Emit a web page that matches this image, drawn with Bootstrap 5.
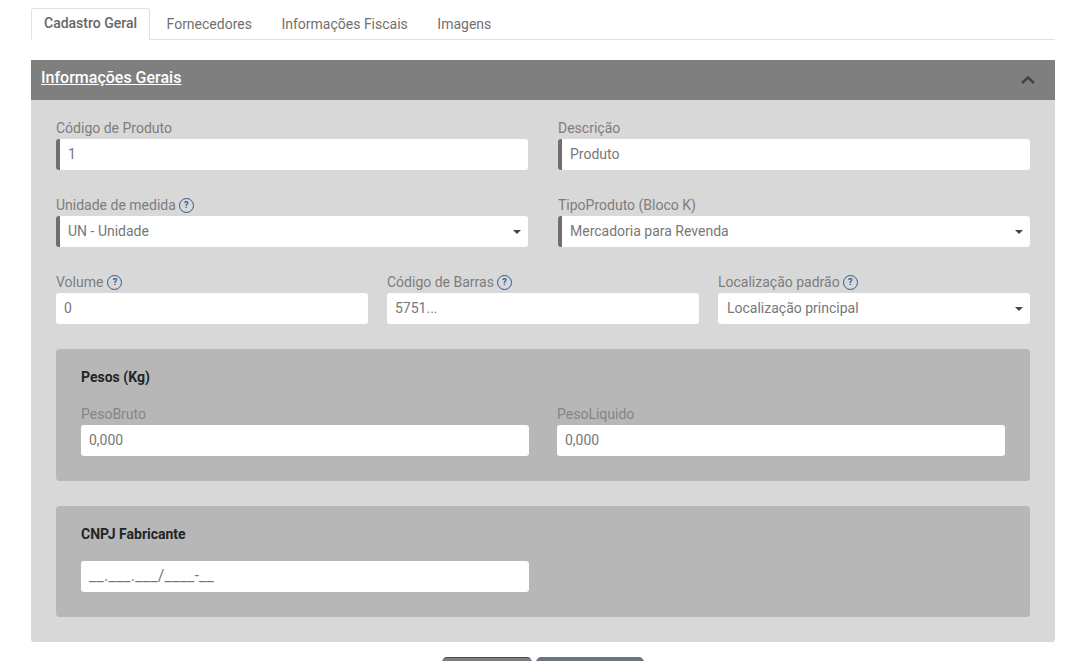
<!DOCTYPE html>
<html lang="pt-BR">
<head>
<meta charset="utf-8">
<title>Cadastro Geral</title>
<link href="https://cdn.jsdelivr.net/npm/bootstrap@5.3.0/dist/css/bootstrap.min.css" rel="stylesheet">
<style>
html,body{background:#fff;}
body{font-family:Roboto,"Liberation Sans",sans-serif;font-size:14px;color:#212529;overflow-x:hidden;}
.page-wrap{padding:8px 14px 0 31px;}
.tabs-line{--bs-nav-tabs-border-color:#dee2e6;--bs-nav-tabs-border-radius:3px;gap:3.5px;height:32px;flex-wrap:nowrap;}
.tabs-line .nav-link{font-size:14px;line-height:21px;padding:5px 12px;color:#6f6f6f;height:32px;}
.tabs-line .nav-link.active{color:#666;font-weight:500;margin-top:0;padding-top:4px;}
.sec-head{margin-top:20px;background:#7f7f7f;height:40px;padding:0 19px 0 10px;}
.sec-title{font-size:16px;font-weight:500;color:#fff;text-decoration:underline;line-height:24px;margin-bottom:5px;}
.sec-body{background:#d8d8d8;padding:17px 25px 25px;border-radius:0 0 3px 3px;}
.two-col{--bs-gutter-x:30px;--bs-gutter-y:0;}
.three-col{--bs-gutter-x:19px;--bs-gutter-y:0;}
.three-col .fld{margin-bottom:25px;}
.peso-col{--bs-gutter-x:28px;--bs-gutter-y:0;}
.fld{margin-bottom:24px;}
.fld-label{display:flex;align-items:center;gap:3px;color:#7d7d7d;font-size:14px;line-height:21px;height:22px;margin:0;}
.fld-input,.fld-input:focus{display:block;height:31px;padding:3px 8px 5px;font-size:14px;line-height:21px;color:#777;background-color:#fff;border:0;border-radius:3px;box-shadow:none;}
.mark-left,.mark-left:focus{border-left:4px solid #6f6f6f;}
.fld-select,.fld-select:focus{padding:4px 24px 4px 8px;background-position:right 7px center;background-size:8px 4px;background-image:url("data:image/svg+xml,%3csvg xmlns='http://www.w3.org/2000/svg' viewBox='0 0 8 4'%3e%3cpath fill='%23444' d='M0 0h8L4 4z'/%3e%3c/svg%3e");}
.fld-select.plain-left{padding-left:9px;}
.help-dot{display:inline-flex;align-items:center;justify-content:center;width:15px;height:15px;border:1.5px solid #2f5a92;border-radius:50%;color:#2f5a92;font-size:9px;font-weight:700;line-height:1;flex:none;}
.help-shift{margin-left:1px;}
.sub-panel{background:#b7b7b7;border-radius:4px;padding:18px 25px 25px;margin-bottom:25px;}
.sub-panel:last-child{margin-bottom:0;}
.sub-title{font-size:14px;font-weight:700;color:#212529;line-height:20px;margin:0 0 17px;}
.sub-panel .fld-label{color:#858585;height:21px;}
.mask-input{font-size:16px;letter-spacing:.25px;}
.mask-input::placeholder{color:#777;opacity:1;}
.foot-btns{margin-top:15px;gap:4px;padding-bottom:10px;}
.foot-btn{height:38px;border-radius:5px;background:#6c757d;border:1px solid #6c757d;}
.foot-a{width:90px;background:#7f7f7f;border-color:#0d5aa7 #7f7f7f #7f7f7f;}
.foot-b{width:108px;}
</style>
</head>
<body>
<div class="page-wrap">
  <ul class="nav nav-tabs tabs-line">
    <li class="nav-item"><a class="nav-link active" href="#">Cadastro Geral</a></li>
    <li class="nav-item"><a class="nav-link" href="#">Fornecedores</a></li>
    <li class="nav-item"><a class="nav-link" href="#">Informações Fiscais</a></li>
    <li class="nav-item"><a class="nav-link" href="#">Imagens</a></li>
  </ul>

  <div class="sec-head d-flex align-items-center justify-content-between">
    <span class="sec-title">Informações Gerais</span>
    <svg width="16" height="10" viewBox="0 0 16 10" aria-hidden="true"><path d="M2 8l6-5.5L14 8" fill="none" stroke="#444" stroke-width="2.6"/></svg>
  </div>

  <div class="sec-body">
    <div class="row two-col">
      <div class="col-6 fld">
        <label class="fld-label">Código de Produto</label>
        <input class="form-control fld-input mark-left" value="1">
      </div>
      <div class="col-6 fld">
        <label class="fld-label">Descrição</label>
        <input class="form-control fld-input mark-left" value="Produto">
      </div>
      <div class="col-6 fld">
        <label class="fld-label">Unidade de medida <span class="help-dot">?</span></label>
        <select class="form-select fld-input fld-select mark-left"><option>UN - Unidade</option></select>
      </div>
      <div class="col-6 fld">
        <label class="fld-label">TipoProduto (Bloco K)</label>
        <select class="form-select fld-input fld-select mark-left"><option>Mercadoria para Revenda</option></select>
      </div>
    </div>
    <div class="row three-col">
      <div class="col-4 fld">
        <label class="fld-label">Volume <span class="help-dot help-shift">?</span></label>
        <input class="form-control fld-input" value="0">
      </div>
      <div class="col-4 fld">
        <label class="fld-label">Código de Barras <span class="help-dot">?</span></label>
        <input class="form-control fld-input" value="5751...">
      </div>
      <div class="col-4 fld">
        <label class="fld-label">Localização padrão <span class="help-dot">?</span></label>
        <select class="form-select fld-input fld-select plain-left"><option>Localização principal</option></select>
      </div>
    </div>

    <div class="sub-panel">
      <p class="sub-title">Pesos (Kg)</p>
      <div class="row peso-col">
        <div class="col-6">
          <label class="fld-label">PesoBruto</label>
          <input class="form-control fld-input" value="0,000">
        </div>
        <div class="col-6">
          <label class="fld-label">PesoLiquido</label>
          <input class="form-control fld-input" value="0,000">
        </div>
      </div>
    </div>

    <div class="sub-panel">
      <p class="sub-title">CNPJ Fabricante</p>
      <div class="row peso-col">
        <div class="col-6">
          <input class="form-control fld-input mask-input" placeholder="__.___.___/____-__">
        </div>
      </div>
    </div>
  </div>

  <div class="foot-btns d-flex justify-content-center">
    <button type="button" class="btn foot-btn foot-a" aria-label="Salvar"></button>
    <button type="button" class="btn foot-btn foot-b" aria-label="Cancelar"></button>
  </div>
</div>
<script src="https://cdn.jsdelivr.net/npm/bootstrap@5.3.0/dist/js/bootstrap.bundle.min.js"></script>
</body>
</html>
